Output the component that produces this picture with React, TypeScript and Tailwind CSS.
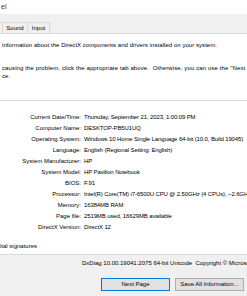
import React from 'react';

const rows: [string, string][] = [
  ['Current Date/Time:', 'Thursday, September 21, 2023, 1:00:09 PM'],
  ['Computer Name:', 'DESKTOP-PB5U1UQ'],
  ['Operating System:', 'Windows 10 Home Single Language 64-bit (10.0, Build 19045)'],
  ['Language:', 'English (Regional Setting: English)'],
  ['System Manufacturer:', 'HP'],
  ['System Model:', 'HP Pavilion Notebook'],
  ['BIOS:', 'F.91'],
  ['Processor:', 'Intel(R) Core(TM) i7-6500U CPU @ 2.50GHz (4 CPUs), ~2.6GHz'],
  ['Memory:', '16384MB RAM'],
  ['Page file:', '2519MB used, 16629MB available'],
  ['DirectX Version:', 'DirectX 12'],
];

const App: React.FC = () => {
  return (
    <div className="w-[247px] h-[296px] overflow-hidden bg-[#f0f0f0] text-[6px] text-black font-['Liberation_Sans',sans-serif]">
      {/* title bar */}
      <div className="h-[14px] bg-white px-[1px] pt-[3px] text-[7px] leading-[7px] text-[#5b2a2a]">el</div>

      {/* tab strip */}
      <div className="h-[19px] flex items-end">
        <div className="w-[3px] h-[11px] border-r border-t border-[#d9d9d9]" />
        <div className="w-[25px] h-[11px] border-r border-t border-[#d9d9d9] flex items-center justify-center">Sound</div>
        <div className="w-[22px] h-[11px] border-r border-t border-[#d9d9d9] flex items-center justify-center">Input</div>
      </div>

      {/* tab page */}
      <div className="h-[222px] bg-white border-y border-[#d9d9d9] whitespace-nowrap overflow-hidden">
        <div className="pl-[2px] pt-[7px] leading-[8px] tracking-[0.05px]">information about the DirectX components and drivers installed on your system.</div>
        <div className="pl-[2px] pt-[15px] leading-[8px] tracking-[0.12px]">
          <div>causing the problem, click the appropriate tab above.&nbsp; Otherwise, you can use the "Next Page" button below to visit each page in sequence.</div>
          <div>ce.</div>
        </div>
        <div className="mt-[20px] border-t border-[#dcdcdc] pt-[11px] pb-[6px]">
          <div className="grid grid-cols-[81px_1fr] gap-x-[3px] leading-[11px]">
            {rows.map(([k, v]) => (
              <React.Fragment key={k}>
                <div className="text-right">{k}</div>
                <div className="overflow-hidden tracking-[-0.12px]">{v}</div>
              </React.Fragment>
            ))}
          </div>
        </div>
        <div className="leading-[8px] pt-[3px]">ital signatures</div>
      </div>

      {/* footer */}
      <div className="pl-[82px] pt-[4px] leading-[8px] whitespace-nowrap overflow-hidden">
        DxDiag 10.00.19041.2075 64-bit Unicode&nbsp; Copyright © Microsoft. All rights reserved.
      </div>
      <div className="flex gap-[5px] pl-[101px] pt-[11px]">
        <button className="w-[69px] h-[13px] bg-[#e1e1e1] border border-[#0078d7] text-[6px] leading-[11px]">Next Page</button>
        <button className="w-[69px] h-[13px] bg-[#e1e1e1] border border-[#adadad] text-[6px] leading-[11px]">Save All Information...</button>
      </div>
    </div>
  );
};

export default App;
